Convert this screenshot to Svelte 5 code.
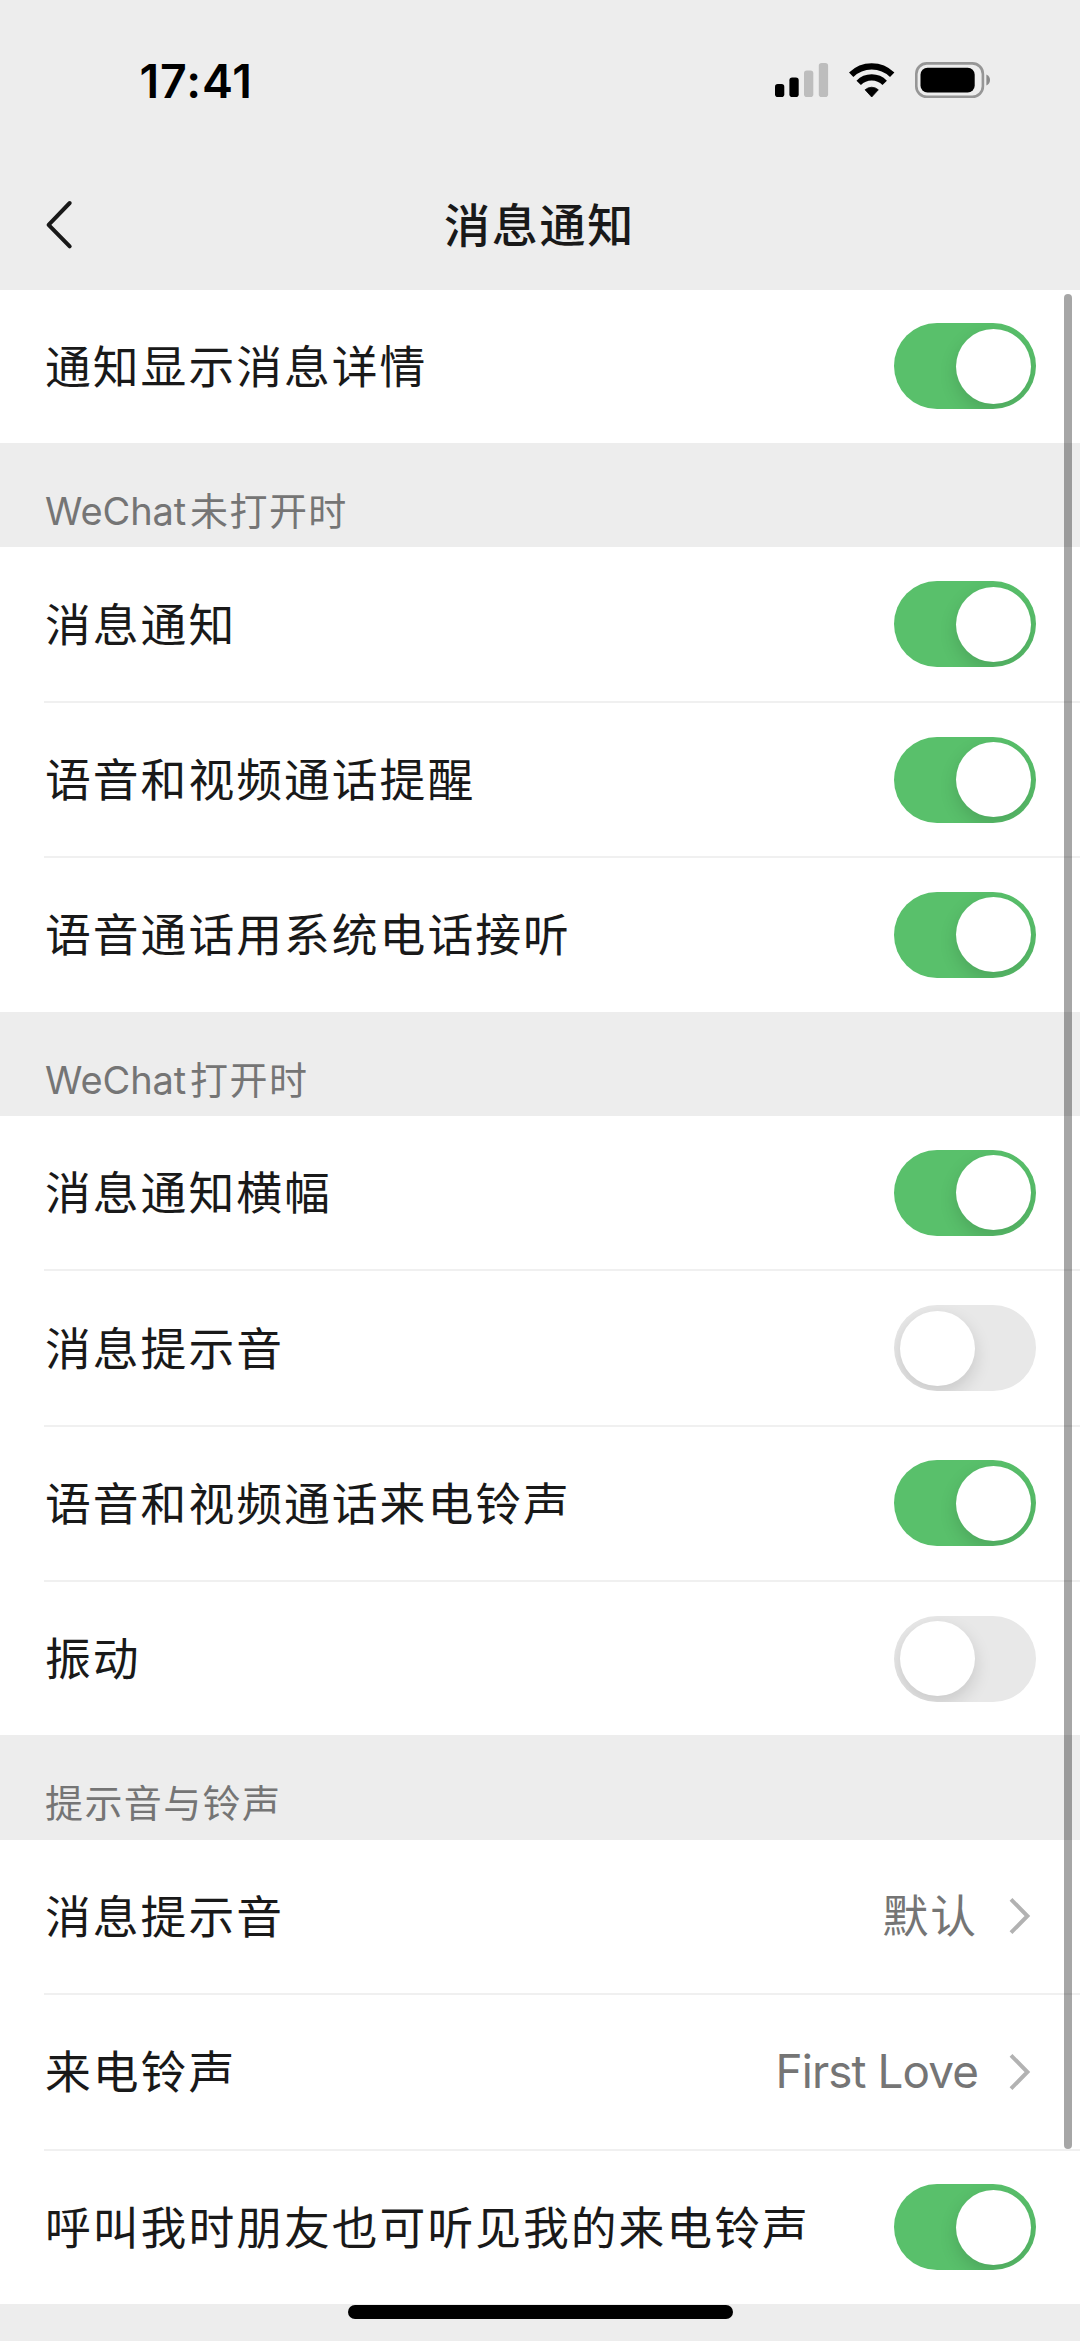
<script>
  const sections = [
    { rows: [{ label: "通知显示消息详情", on: true }] },
    {
      latin: "WeChat",
      title: "未打开时",
      rows: [
        { label: "消息通知", on: true },
        { label: "语音和视频通话提醒", on: true },
        { label: "语音通话用系统电话接听", on: true },
      ],
    },
    {
      latin: "WeChat",
      title: "打开时",
      rows: [
        { label: "消息通知横幅", on: true },
        { label: "消息提示音", on: false },
        { label: "语音和视频通话来电铃声", on: true },
        { label: "振动", on: false },
      ],
    },
    {
      title: "提示音与铃声",
      rows: [
        { label: "消息提示音", value: "默认" },
        { label: "来电铃声", value: "First Love", latin: true },
        { label: "呼叫我时朋友也可听见我的来电铃声", on: true },
      ],
    },
  ];

  let list = $state(sections);
</script>

<div class="screen">
  <div class="status">
    <span class="time">17:41</span>
    <svg class="icons" width="218" height="40" viewBox="0 0 218 40">
      <rect x="0" y="16" width="9.3" height="13" rx="2.8" />
      <rect x="14.4" y="9.6" width="9.3" height="19.4" rx="2.8" />
      <rect x="29" y="2.4" width="9.3" height="26.6" rx="2.8" fill="#bdbdbd" />
      <rect x="43.8" y="-5" width="9.3" height="34" rx="2.8" fill="#bdbdbd" />
      <g fill="none" stroke="#000" stroke-width="6.2">
        <path d="M76.2 6.8 A29.2 29.2 0 0 1 117.2 6.8" />
        <path d="M83.7 14.8 A18.2 18.2 0 0 1 109.7 14.8" />
      </g>
      <path d="M96.7 29 L90.1 21.8 A9.8 9.8 0 0 1 103.3 21.8 Z" stroke="#000" stroke-width="0.8" stroke-linejoin="round" />
      <rect x="141.3" y="-4.6" width="66.6" height="33.4" rx="10.5" fill="none" stroke="#969696" stroke-width="2.6" />
      <rect x="145.5" y="-0.2" width="54.2" height="24.8" rx="7" />
      <path d="M211.4 6.6 Q215 8.4 215 12 Q215 15.6 211.4 17.4 Z" fill="#8c8c8c" />
    </svg>
  </div>

  <header class="nav">
    <svg class="back" width="28" height="50" viewBox="0 0 28 50">
      <path d="M24.7 3 L3.6 24.8 L24.7 46.4" />
    </svg>
    <h1>消息通知</h1>
  </header>

  <main>
    {#each list as section}
      {#if section.title}
        <h2>
          {#if section.latin}<span class="latin">{section.latin}</span>{/if}{section.title}
        </h2>
      {/if}
      <ul>
        {#each section.rows as row}
          <li>
            <div class="row">
              <span class="label">{row.label}</span>
              {#if row.value}
                <span class="value" class:latin={row.latin}>{row.value}</span>
                <svg class="chevron" width="22" height="38" viewBox="0 0 22 38">
                  <path d="M2 2.4 L18.4 19 L2 35.6" />
                </svg>
              {:else}
                <button
                  class="toggle"
                  class:on={row.on}
                  aria-label={row.label}
                  onclick={() => (row.on = !row.on)}
                >
                  <span class="knob"></span>
                </button>
              {/if}
            </div>
          </li>
        {/each}
      </ul>
    {/each}
  </main>

  <div class="scrollbar"></div>
  <div class="home"></div>
</div>

<style>
  :global(body) {
    background: #ededed;
  }
  .screen {
    position: relative;
    width: 1080px;
    height: 2341px;
    overflow: hidden;
    background: #ededed;
    color: #191919;
    font-family: Inter, "Noto Sans CJK SC", sans-serif;
  }

  .status {
    display: flex;
    justify-content: space-between;
    align-items: center;
    height: 160px;
    box-sizing: border-box;
    padding: 1px 87px 0 139.5px;
  }
  .time {
    font-size: 46.5px;
    font-weight: 600;
    letter-spacing: 0.9px;
    color: #000;
  }
  .icons {
    overflow: visible;
    margin-top: 15px;
  }

  .nav {
    display: flex;
    align-items: center;
    justify-content: center;
    height: 129.5px;
    box-sizing: border-box;
    padding: 0 45px;
  }
  .back {
    fill: none;
    stroke: #191919;
    stroke-width: 4;
    stroke-linecap: round;
    stroke-linejoin: round;
  }
  h1 {
    flex: 1;
    margin: 0 29px 0 0;
    text-align: center;
    font-size: 46px;
    font-weight: 500;
    line-height: 60px;
    letter-spacing: 1.8px;
  }

  h2 {
    display: flex;
    align-items: center;
    height: 104.2px;
    margin: 0;
    box-sizing: border-box;
    padding: 32px 45px 0;
    font-size: 38px;
    font-weight: 400;
    line-height: 50px;
    letter-spacing: 1.4px;
    color: #757575;
  }
  h2 .latin {
    margin-right: 4px;
    letter-spacing: -0.1px;
  }

  ul {
    margin: 0;
    padding: 0 0 0 44px;
    list-style: none;
    background: #fff;
  }
  li {
    height: 155.35px;
    box-sizing: border-box;
    border-top: 2px solid #f0f0f0;
  }
  li:first-child {
    height: 153.6px;
    border-top: 0;
  }
  .row {
    display: flex;
    align-items: center;
    height: 100%;
    padding-right: 44px;
  }
  .label,
  .value {
    font-size: 45.8px;
    line-height: 60px;
    letter-spacing: 2px;
    white-space: nowrap;
  }
  .label {
    flex: 1;
    padding: 3px 0 0 1px;
  }
  .value {
    padding-top: 2px;
    color: #757575;
  }
  .value.latin {
    padding-top: 0;
    letter-spacing: -0.9px;
  }
  .chevron {
    margin: 0 5px 0 31px;
    fill: none;
    stroke: #b2b2b2;
    stroke-width: 4;
  }

  .toggle {
    display: flex;
    align-items: center;
    width: 142px;
    height: 86px;
    padding: 0 5.5px;
    border: 0;
    border-radius: 43px;
    overflow: hidden;
    background: #e8e8e8;
  }
  .toggle.on {
    justify-content: flex-end;
    background: #59c06b;
  }
  .knob {
    width: 75px;
    height: 75px;
    border-radius: 50%;
    background: #fff;
    box-shadow: 0 7px 18px rgba(0, 0, 0, 0.14);
  }

  .scrollbar {
    position: absolute;
    top: 294px;
    left: 1063.5px;
    width: 8.5px;
    height: 1855px;
    border-radius: 4px;
    background: rgba(0, 0, 0, 0.35);
  }
  .home {
    position: absolute;
    left: 348px;
    top: 2305px;
    width: 385px;
    height: 14px;
    border-radius: 7px;
    background: #000;
  }
</style>
